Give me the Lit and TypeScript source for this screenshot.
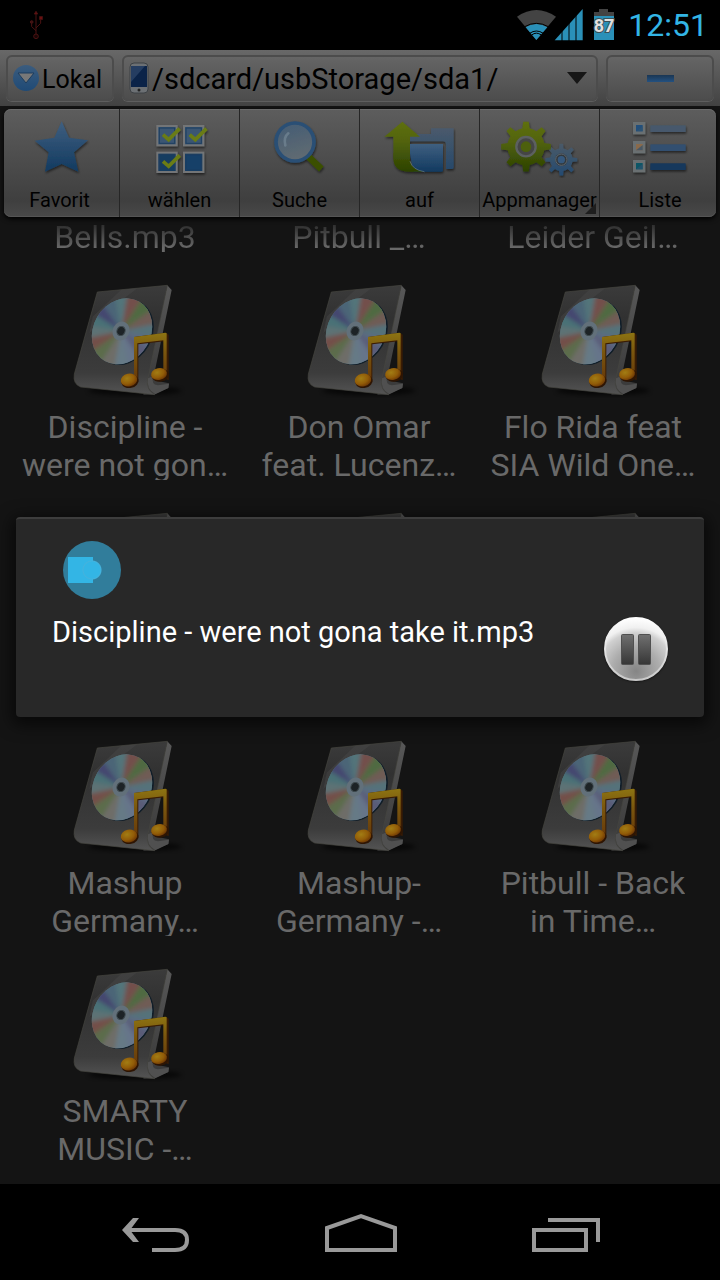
import { LitElement, html, svg, css } from "lit";
import { customElement, property } from "lit/decorators.js";

const FONT = css`Roboto, "Noto Sans", sans-serif`;

/** Outline of a cog with n teeth between the inner and the outer radius. */
function gear(cx: number, cy: number, n: number, outer: number, inner: number): string {
  const step = (Math.PI * 2) / n;
  const pts: string[] = [];
  const put = (r: number, a: number) =>
    pts.push(`${(cx + r * Math.sin(a)).toFixed(1)},${(cy - r * Math.cos(a)).toFixed(1)}`);
  for (let i = 0; i < n; i++) {
    const a = i * step;
    put(inner, a - step * 0.25);
    put(outer, a - step * 0.14);
    put(outer, a + step * 0.14);
    put(inner, a + step * 0.25);
    put(inner, a + step * 0.5);
  }
  return pts.join(" ");
}

/** Reflections on the disc, clockwise from twelve o'clock. */
const SHEEN = [
  "#53757a", "#73504c", "#4f6b43", "#6f5b54", "#55727a", "#5c6b82", "#5a5c78", "#66748a",
  "#667a86", "#6e6d68", "#5b6c4c", "#73504a", "#5d7274", "#4a7176", "#454670", "#4b6577",
];

function wedge(i: number): string {
  const n = SHEEN.length;
  const a = ((i - 0.55) / n) * Math.PI * 2;
  const b = ((i + 0.55) / n) * Math.PI * 2;
  const p = (t: number) => `${(183 + 150 * Math.sin(t)).toFixed(1)},${(183 - 150 * Math.cos(t)).toFixed(1)}`;
  return `183,183 ${p(a)} ${p(b)}`;
}

@customElement("music-icon")
class MusicIcon extends LitElement {
  static styles = css`
    :host { display: block; width: 130px; height: 115px; }
    svg { display: block; width: 100%; height: 100%; }
  `;
  render() {
    return html`<svg viewBox="0 39 390 345" aria-hidden="true">
      <defs>
        <linearGradient id="plate" x1="0" y1="0" x2="0" y2="1">
          <stop offset="0" stop-color="#3b3b3b" /><stop offset=".3" stop-color="#313131" />
          <stop offset=".8" stop-color="#3c3c3c" /><stop offset="1" stop-color="#545454" />
        </linearGradient>
        <linearGradient id="edge" x1="0" y1="0" x2="0" y2="1">
          <stop offset="0" stop-color="#585858" /><stop offset=".5" stop-color="#484848" /><stop offset="1" stop-color="#383838" />
        </linearGradient>
        <linearGradient id="gold" x1="0" y1="0" x2="0" y2="1">
          <stop offset="0" stop-color="#8d7412" /><stop offset=".4" stop-color="#7a560e" /><stop offset="1" stop-color="#66390a" />
        </linearGradient>
        <radialGradient id="note" cx=".4" cy=".35" r=".7">
          <stop offset="0" stop-color="#a27d14" /><stop offset=".6" stop-color="#925c08" /><stop offset="1" stop-color="#6a3404" />
        </radialGradient>
        <clipPath id="disc"><ellipse cx="186" cy="184" rx="86" ry="103" transform="rotate(30 186 184)" /></clipPath>
        <filter id="soft" x="-20%" y="-20%" width="140%" height="140%"><feGaussianBlur stdDeviation="6" /></filter>
      </defs>
      <ellipse cx="225" cy="362" rx="140" ry="14" fill="#000" opacity=".6" filter="url(#soft)" />
      <path d="M322 46 L335 60 L282 315 Q278 334 296 334 L327 340 L325 354 L282 373 L250 374 Z" fill="url(#edge)" />
      <path d="M112 66 L322 46 L264 325 Q256 360 285 374 L62 351 Q38 342 43 312 Z" fill="url(#plate)" stroke="#45453f" stroke-width="2" />
      <path d="M184 59 L232 55 L140 125 L88 190 L98 140 Z" fill="#4b4b4b" opacity=".4" />
      <path d="M264 325 Q258 358 286 373 L325 354 L327 341 L294 346 Q272 344 280 318 Z" fill="#505050" />
      <ellipse cx="191" cy="186" rx="86" ry="103" transform="rotate(30 191 186)" fill="#101d28" />
      <g clip-path="url(#disc)">
        <rect x="70" y="60" width="240" height="250" fill="#55707a" />
        <g filter="url(#soft)">${SHEEN.map((c, i) => svg`<polygon points=${wedge(i)} fill=${c} />`)}</g>
      </g>
      <ellipse cx="183" cy="183" rx="25" ry="29" transform="rotate(25 183 183)" fill="#62707a" />
      <ellipse cx="183" cy="183" rx="12" ry="14" transform="rotate(25 183 183)" fill="#1d2326" stroke="#3d484c" stroke-width="3" />
      <path d="M222 201 L318 188 L326 194 V330 L314 326 V214 L235 223 V335 L222 330 Z" fill="#3a1c04" />
      <path d="M222 201 L316 188 L320 190 V322 L310 312 V211 L232 220 V332 L222 325 Z" fill="url(#gold)" />
      <ellipse cx="210" cy="334" rx="26" ry="20" transform="rotate(-12 210 334)" fill="#2e1503" />
      <ellipse cx="207" cy="330" rx="25" ry="19" transform="rotate(-12 207 330)" fill="url(#note)" />
      <ellipse cx="301" cy="316" rx="26" ry="19" transform="rotate(-12 301 316)" fill="#2e1503" />
      <ellipse cx="297" cy="312" rx="24" ry="18" transform="rotate(-12 297 312)" fill="url(#note)" />
    </svg>`;
  }
}

@customElement("file-tile")
class FileTile extends LitElement {
  @property({ type: Array }) lines: string[] = [];
  @property({ type: Boolean }) cut = false;
  static styles = css`
    :host { display: block; min-width: 0; }
    .tile {
      display: flex; flex-direction: column; align-items: center; gap: 10px;
      width: 100%; margin: 0; padding: 0; border: 0; background: none;
      font: 32px/38px ${FONT}; color: #696969; cursor: pointer;
    }
    .label { height: 72px; overflow: hidden; }
    .label.short { height: 34px; }
    .line { display: block; white-space: nowrap; }
    .short .line {
      background: linear-gradient(#2c2c2c 15%, #696969 80%);
      background-clip: text; -webkit-background-clip: text; color: transparent;
    }
  `;
  render() {
    return html`<button class="tile" type="button">
      ${this.cut ? "" : html`<music-icon></music-icon>`}
      <span class="label ${this.cut ? "short" : ""}">${this.lines.map((l) => html`<span class="line">${l}</span>`)}</span>
    </button>`;
  }
}

const blueStops = svg`<stop offset="0" stop-color="#3f5f80" /><stop offset="1" stop-color="#123a60" />`;
const greenStops = svg`<stop offset="0" stop-color="#5f7010" /><stop offset=".4" stop-color="#526310" /><stop offset="1" stop-color="#2c4200" />`;

const ICON_DEFS = svg`<defs>
  <linearGradient id="blue" x1="0" y1="0" x2="0" y2="1">${blueStops}</linearGradient>
  <linearGradient id="green" x1="0" y1="0" x2="0" y2="1">${greenStops}</linearGradient>
  <linearGradient id="pale" x1="0" y1="0" x2="0" y2="1"><stop offset="0" stop-color="#4a5a6c" /><stop offset="1" stop-color="#27496b" /></linearGradient>
  <linearGradient id="lens" x1="0" y1="0" x2=".3" y2="1"><stop offset="0" stop-color="#435c74" /><stop offset="1" stop-color="#5f6a72" /></linearGradient>
  <linearGradient id="sky" x1="0" y1="0" x2="0" y2="1"><stop offset="0" stop-color="#4a5a68" /><stop offset="1" stop-color="#244a70" /></linearGradient>
  <filter id="drop" x="-20%" y="-20%" width="150%" height="150%">
    <feDropShadow dx="2" dy="5" stdDeviation="3" flood-color="#000" flood-opacity=".55" />
  </filter>
</defs>`;

const box = (x: number, y: number, fill: string, tick: boolean) => svg`
  <rect x=${x + 3} y=${y + 3} width="58" height="58" fill=${fill} stroke="#737577" stroke-width="6" />
  <rect x=${x + 9} y=${y + 9} width="46" height="46" fill="none" stroke="#1d3f60" stroke-width="3" />
  ${tick ? svg`<path d="M${x + 20} ${y + 29} L${x + 37} ${y + 44} L${x + 70} ${y + 11}" fill="none" stroke="#6a7c14" stroke-width="11" />` : ""}`;

const row = (y: number, fill: string, mark: string) => svg`
  <rect x="459" y=${y} width="37" height="37" fill="#6a7072" />
  <rect x="468" y=${y + 9} width="20" height="19" fill=${mark} />
  <path d="M468 ${y + 28} L488 ${y + 12} V${y + 28} Z" fill="#2f5270" opacity=".7" />
  <rect x="511" y=${y + 10} width="106" height="20" fill=${fill} />`;

const TOOLS = [
  {
    name: "Favorit", box: "72 42 216 180",
    art: svg`<polygon points="185,52 207,101 264,109 222,145 235,203 185,180 135,203 146,145 104,110 163,101" fill="url(#blue)" />`,
  },
  {
    name: "wählen", box: "432 42 216 180",
    art: svg`${box(469, 63, "#3a5673", true)}${box(549, 63, "#3a5673", true)}${box(469, 143, "#173c60", true)}${box(549, 143, "#173f68", false)}`,
  },
  {
    name: "Suche", box: "72 42 216 180",
    art: svg`<path d="M205 158 L244 195" stroke="#3a4f04" stroke-width="20" />
      <circle cx="165" cy="114" r="57" fill="url(#lens)" stroke="#2a4f75" stroke-width="11" />
      <path d="M136 124 Q130 100 145 88" fill="none" stroke="#7a8c9b" stroke-width="8" stroke-linecap="round" opacity=".6" />`,
  },
  {
    name: "auf", box: "432 42 216 180",
    art: svg`<path d="M505 90 H573 V73 H641 V190 Q641 195 636 195 H618 V122 Q618 112 608 112 H505 Z" fill="url(#pale)" />
      <path d="M505 120 H609 V199 Q609 203 604 203 H520 Z" fill="url(#blue)" />
      <path d="M487 53 L540 98 H510 V170 Q516 198 550 203 H508 Q460 203 460 162 V98 H433 Z" fill="url(#green)" />
      <path d="M510 172 Q518 198 553 203" fill="none" stroke="#6b7a84" stroke-width="2" />`,
  },
  {
    name: "Appmanager", box: "72 42 216 180", nudge: true, more: true,
    art: svg`<polygon points=${gear(245, 167, 8, 48, 34)} fill="url(#sky)" />
      <circle cx="245" cy="167" r="19" fill="#33383d" /><circle cx="245" cy="167" r="17" fill="none" stroke="#5d6870" stroke-width="3" />
      <circle cx="245" cy="167" r="11" fill="#35597d" />
      <polygon points=${gear(139, 128, 8, 75, 56)} fill="url(#green)" />
      <circle cx="139" cy="128" r="29" fill="#454545" stroke="#5c6160" stroke-width="7" />
      <circle cx="139" cy="128" r="16" fill="#4d600c" />`,
  },
  {
    name: "Liste", box: "432 42 216 180",
    art: svg`${row(54, "#46586c", "#22507c")}${row(111, "#31506f", "#8a6a4c")}${row(168, "#14375c", "#0d5666")}`,
  },
].map((t, i) => (i === 4 ? { ...t, box: "64 42 234 180", wide: true } : t));

@customElement("tool-button")
class ToolButton extends LitElement {
  @property({ attribute: false }) tool: any;
  static styles = css`
    :host { display: block; min-width: 0; }
    .tool {
      position: relative; display: flex; flex-direction: column; align-items: center; gap: 10px;
      width: 100%; margin: 0; padding: 9px 0 5px; border: 0; background: none;
      font: 20px/24px ${FONT}; color: #000; cursor: pointer;
    }
    .art { display: block; width: 72px; height: 60px; }
    .art.wide { width: 78px; }
    .more { position: absolute; right: 3px; bottom: 3px; width: 11px; height: 11px; }
  `;
  render() {
    return html`<button class="tool" type="button">
      <svg class="art ${this.tool.wide ? "wide" : ""}" viewBox=${this.tool.box} aria-hidden="true">${ICON_DEFS}<g filter="url(#drop)">${this.tool.art}</g></svg>
      <span>${this.tool.name}</span>
      ${this.tool.more ? html`<svg class="more" viewBox="0 0 11 11" aria-hidden="true"><path d="M11 0V11H0Z" fill="#1e1e1e" /></svg>` : ""}
    </button>`;
  }
}

@customElement("player-dialog")
class PlayerDialog extends LitElement {
  static styles = css`
    :host {
      display: block; box-sizing: border-box; padding: 22px 36px 36px;
      background: #282828; border-radius: 4px;
      border-top: 2px solid #3d3d3d; box-shadow: 0 4px 16px 4px rgba(0, 0, 0, .6);
      font: 29px/30px ${FONT}; color: #fff;
    }
    .seek {
      -webkit-appearance: none; appearance: none; display: block;
      width: calc(100% - 22px); height: 58px; margin: 0 11px 18px; background: none;
    }
    .seek::-webkit-slider-thumb {
      -webkit-appearance: none; width: 58px; height: 58px; border: 0; border-radius: 50%;
      background:
        radial-gradient(circle at 29px 29px, #33b5e5 8px, #45b2dc 9px, transparent 10px),
        linear-gradient(#33b5e5, #33b5e5) 5px 16px / 25px 26px no-repeat,
        #317d9b;
    }
    .row { display: flex; align-items: flex-start; justify-content: space-between; gap: 16px; }
    .title { min-width: 0; }
    .pause {
      display: block; flex: none; width: 64px; height: 64px; margin: 0; padding: 0; border: 0;
      border-radius: 50%; background: none; cursor: pointer; box-shadow: 0 1px 2px #0008;
    }
    .pause svg { display: block; width: 100%; height: 100%; }
  `;
  render() {
    return html`
      <input class="seek" type="range" min="0" max="100" value="0" aria-labelledby="title" />
      <div class="row">
        <label class="title" id="title">Discipline - were not gona take it.mp3</label>
        <button class="pause" type="button" aria-label="Pause">
          <svg viewBox="0 0 64 64">
            <defs>
              <radialGradient id="knob" cx=".5" cy=".86" r=".86">
                <stop offset="0" stop-color="#858585" /><stop offset=".45" stop-color="#adadad" />
                <stop offset=".72" stop-color="#d0d0d0" /><stop offset=".82" stop-color="#f0f0f0" /><stop offset="1" stop-color="#fff" />
              </radialGradient>
              <linearGradient id="bar" x1="0" y1="0" x2="0" y2="1"><stop offset="0" stop-color="#707070" /><stop offset="1" stop-color="#363636" /></linearGradient>
              <linearGradient id="rim" x1="0" y1="0" x2="0" y2="1"><stop offset="0" stop-color="#fff" /><stop offset="1" stop-color="#c8c8c8" /></linearGradient>
            </defs>
            <circle cx="32" cy="32" r="31" fill="url(#knob)" stroke="url(#rim)" stroke-width="2" />
            <rect x="17.500" y="17.500" width="12" height="30" rx="1" fill="url(#bar)" stroke="#505050" />
            <rect x="34.500" y="17.500" width="12" height="30" rx="1" fill="url(#bar)" stroke="#505050" />
          </svg>
        </button>
      </div>`;
  }
}

const FILES: { lines: string[]; cut?: boolean }[] = [
  { lines: ["Bells.mp3"], cut: true },
  { lines: ["Pitbull _…"], cut: true },
  { lines: ["Leider Geil…"], cut: true },
  { lines: ["Discipline -", "were not gon…"] },
  { lines: ["Don Omar", "feat. Lucenz…"] },
  { lines: ["Flo Rida feat", "SIA Wild One…"] },
  { lines: [] }, { lines: [] }, { lines: [] },
  { lines: ["Mashup", "Germany…"] },
  { lines: ["Mashup-", "Germany -…"] },
  { lines: ["Pitbull - Back", "in Time…"] },
  { lines: ["SMARTY", "MUSIC -…"] },
];

@customElement("app-root")
class AppRoot extends LitElement {
  static styles = css`
    :host { display: block; font-family: ${FONT}; background: #000; }
    .screen { display: flex; flex-direction: column; min-height: 100vh; }
    .status {
      display: flex; align-items: center; height: 50px; box-sizing: border-box;
      padding: 0 12px 0 28px; color: #33b5e5; font-size: 32px; line-height: 50px;
    }
    .status svg { display: block; flex: none; }
    .usb { margin-right: auto; }
    .wifi { margin-right: -2px; }
    .battery { margin: 0 13px 0 10px; }
    .pct { font: bold 18px ${FONT}; }
    .main { position: relative; flex: 1; display: flex; flex-direction: column; background: #141414; }
    .path {
      display: flex; gap: 8px; padding: 5px 6px; height: 56px; box-sizing: border-box;
      background: linear-gradient(#686868, #424242);
    }
    .field {
      box-sizing: border-box; height: 46px; margin: 0; border: 2px solid #4c4c4c; border-radius: 6px;
      background: linear-gradient(#656565, #4d4d4d); color: #000; font-family: ${FONT};
      box-shadow: 0 1px 0 #5e5e5e;
    }
    .local { display: flex; align-items: center; gap: 2px; width: 108px; padding: 2px 4px 0; font-size: 25px; }
    .local svg { flex: none; }
    .where { display: flex; align-items: center; flex: 1; min-width: 0; padding: 0 9px 0 5px; }
    .where svg { flex: none; }
    .dir {
      -webkit-appearance: none; appearance: none; flex: 1; min-width: 0; height: 42px; padding: 2px 0 0 3px;
      border: 0; background: none; color: #000; font: 29px ${FONT};
    }
    .close { display: flex; align-items: center; justify-content: center; width: 108px; padding: 0; }
    .dash { width: 27px; height: 7px; background: linear-gradient(#1a3653, #245180); }
    .tools {
      display: grid; grid-template-columns: 115px repeat(4, 1fr) 117px; margin: 3px 4px 0;
      border-radius: 7px; background: linear-gradient(#5d5d5d, #3f3f3f 85%, #494949);
      box-shadow: 0 2px 5px #000, inset 0 1px 0 #6a6a6a, inset 0 -1px 0 #555;
    }
    .slot + .slot { border-left: 1px solid #262626; }
    .slot:first-child { padding-right: 4px; }
    .slot:last-child { padding-left: 4px; }
    .files {
      display: grid; grid-template-columns: repeat(3, 1fr); row-gap: 31px;
      margin: 0; padding: 1px 10px 20px 8px;
    }
    .player { position: absolute; left: 16px; right: 16px; top: 50%; transform: translateY(-50%); }
    .nav { display: grid; grid-template-columns: repeat(3, 1fr); height: 96px; padding: 0 51px 0 53px; background: #000; }
    .key { display: flex; align-items: center; justify-content: center; margin: 0; padding: 0; border: 0; background: none; cursor: pointer; }
  `;

  render() {
    return html`<div class="screen">
      <header class="status">
        <svg class="usb" width="16" height="30" viewBox="84 30 48 90" fill="none" stroke="#4a1212" stroke-width="3">
          <path d="M108 38V104M108 92L95 80V68M108 84L122 70V58" /><path d="M103 42L108 34L113 42Z" fill="#7a1010" />
          <circle cx="95" cy="66" r="4" fill="#3a1616" /><rect x="119" y="50" width="8" height="8" fill="#7a1010" /><circle cx="108" cy="109" r="7" fill="#1a0505" />
        </svg>
        <svg class="wifi" width="39" height="32" viewBox="471 27 117 96">
          <path d="M471 50Q529 10 588 50L529 120Z" fill="#434343" />
          <path d="M497 82Q529 62 562 82L529 120Z" fill="#2a90b8" />
          <path d="M494 80Q529 60 565 80M509 100Q529 86 550 100M515 105Q529 94 544 105" fill="none" stroke="#000" stroke-width="3" />
        </svg>
        <svg width="29" height="32" viewBox="580 27 87 96">
          <path d="M582 121L666 27V121Z" fill="#2a90b8" />
          <path d="M604 90V123M625 60V123M646 40V123" stroke="#000" stroke-width="3" />
        </svg>
        <svg class="battery" width="22" height="32" viewBox="0 0 22 32">
          <path d="M1 3H6V0H15V3H21V31H1Z" fill="#434343" /><rect x="1" y="7" width="20" height="24" fill="#2a90b8" />
          <text class="pct" x="11" y="23" text-anchor="middle" fill="#e0e0e0" stroke="#3a5058" stroke-width="2" paint-order="stroke">87</text>
        </svg>
        <time>12:51</time>
      </header>
      <main class="main">
        <div class="path">
          <button class="field local" type="button">
            <svg width="28" height="28" viewBox="0 0 28 28">
              <defs><linearGradient id="ball" x1="0" y1="0" x2="0" y2="1"><stop offset="0" stop-color="#3b5c7e" /><stop offset="1" stop-color="#1f4a76" /></linearGradient></defs>
              <circle cx="14" cy="13" r="13" fill="url(#ball)" /><path d="M6 8H22L14 18Z" fill="#787878" stroke="#1d3d5e" />
            </svg>
            <span>Lokal</span>
          </button>
          <div class="field where">
            <svg width="20" height="32" viewBox="0 0 20 32">
              <rect x="1" y="1" width="18" height="30" rx="4" fill="#6c7074" stroke="#3d4145" />
              <rect x="2" y="4" width="16" height="21" fill="#0b2348" /><path d="M2 4H16L2 20Z" fill="#31496c" opacity=".7" />
              <circle cx="10" cy="28" r="1.500" fill="#222" />
            </svg>
            <select class="dir" aria-label="/sdcard/usbStorage/sda1/"><option>/sdcard/usbStorage/sda1/</option></select>
            <svg width="20" height="12" viewBox="0 0 20 12"><path d="M0 0H20L10 12Z" fill="#161616" /></svg>
          </div>
          <button class="field close" type="button" aria-label="–"><span class="dash"></span></button>
        </div>
        <nav class="tools">${TOOLS.map((t) => html`<div class="slot"><tool-button .tool=${t}></tool-button></div>`)}</nav>
        <section class="files">${FILES.map((f) => html`<file-tile .lines=${f.lines} ?cut=${!!f.cut}></file-tile>`)}</section>
        <player-dialog class="player" role="dialog"></player-dialog>
      </main>
      <footer class="nav">
        <button class="key" type="button" aria-label="Back">
          <svg width="68" height="40" viewBox="0 0 68 40"><path d="M8 18H53Q65 18 65 28Q65 38 53 38H30" fill="none" stroke="#999" stroke-width="4" /><path d="M0 18L11 6H17L8 18L17 30H11Z" fill="#999" /></svg>
        </button>
        <button class="key" type="button" aria-label="Home">
          <svg width="72" height="40" viewBox="0 0 72 40"><path d="M2 38V16L36 4L70 16V38Z" fill="none" stroke="#999" stroke-width="4" /></svg>
        </button>
        <button class="key" type="button" aria-label="Recent">
          <svg width="68" height="40" viewBox="0 0 68 40"><path d="M2 18H54V38H2ZM16 8H66V30" fill="none" stroke="#999" stroke-width="4" /></svg>
        </button>
      </footer>
    </div>`;
  }
}
